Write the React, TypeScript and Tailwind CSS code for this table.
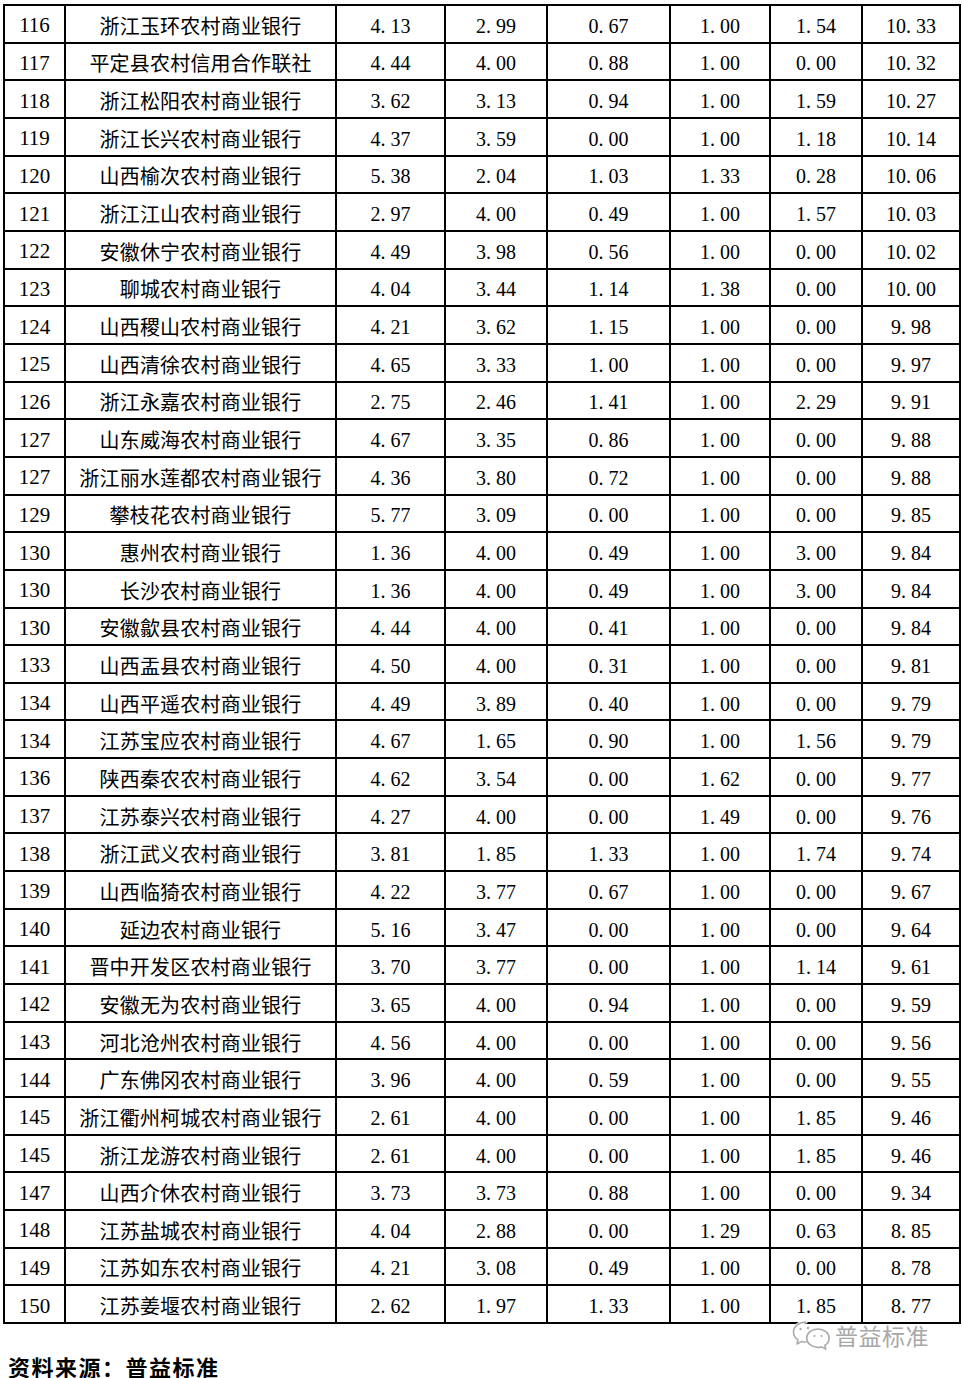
import React from "react";

type Row = [string, string, string, string, string, string, string, string];

const rows: Row[] = [
  ["116", "浙江玉环农村商业银行", "4.13", "2.99", "0.67", "1.00", "1.54", "10.33"],
  ["117", "平定县农村信用合作联社", "4.44", "4.00", "0.88", "1.00", "0.00", "10.32"],
  ["118", "浙江松阳农村商业银行", "3.62", "3.13", "0.94", "1.00", "1.59", "10.27"],
  ["119", "浙江长兴农村商业银行", "4.37", "3.59", "0.00", "1.00", "1.18", "10.14"],
  ["120", "山西榆次农村商业银行", "5.38", "2.04", "1.03", "1.33", "0.28", "10.06"],
  ["121", "浙江江山农村商业银行", "2.97", "4.00", "0.49", "1.00", "1.57", "10.03"],
  ["122", "安徽休宁农村商业银行", "4.49", "3.98", "0.56", "1.00", "0.00", "10.02"],
  ["123", "聊城农村商业银行", "4.04", "3.44", "1.14", "1.38", "0.00", "10.00"],
  ["124", "山西稷山农村商业银行", "4.21", "3.62", "1.15", "1.00", "0.00", "9.98"],
  ["125", "山西清徐农村商业银行", "4.65", "3.33", "1.00", "1.00", "0.00", "9.97"],
  ["126", "浙江永嘉农村商业银行", "2.75", "2.46", "1.41", "1.00", "2.29", "9.91"],
  ["127", "山东威海农村商业银行", "4.67", "3.35", "0.86", "1.00", "0.00", "9.88"],
  ["127", "浙江丽水莲都农村商业银行", "4.36", "3.80", "0.72", "1.00", "0.00", "9.88"],
  ["129", "攀枝花农村商业银行", "5.77", "3.09", "0.00", "1.00", "0.00", "9.85"],
  ["130", "惠州农村商业银行", "1.36", "4.00", "0.49", "1.00", "3.00", "9.84"],
  ["130", "长沙农村商业银行", "1.36", "4.00", "0.49", "1.00", "3.00", "9.84"],
  ["130", "安徽歙县农村商业银行", "4.44", "4.00", "0.41", "1.00", "0.00", "9.84"],
  ["133", "山西盂县农村商业银行", "4.50", "4.00", "0.31", "1.00", "0.00", "9.81"],
  ["134", "山西平遥农村商业银行", "4.49", "3.89", "0.40", "1.00", "0.00", "9.79"],
  ["134", "江苏宝应农村商业银行", "4.67", "1.65", "0.90", "1.00", "1.56", "9.79"],
  ["136", "陕西秦农农村商业银行", "4.62", "3.54", "0.00", "1.62", "0.00", "9.77"],
  ["137", "江苏泰兴农村商业银行", "4.27", "4.00", "0.00", "1.49", "0.00", "9.76"],
  ["138", "浙江武义农村商业银行", "3.81", "1.85", "1.33", "1.00", "1.74", "9.74"],
  ["139", "山西临猗农村商业银行", "4.22", "3.77", "0.67", "1.00", "0.00", "9.67"],
  ["140", "延边农村商业银行", "5.16", "3.47", "0.00", "1.00", "0.00", "9.64"],
  ["141", "晋中开发区农村商业银行", "3.70", "3.77", "0.00", "1.00", "1.14", "9.61"],
  ["142", "安徽无为农村商业银行", "3.65", "4.00", "0.94", "1.00", "0.00", "9.59"],
  ["143", "河北沧州农村商业银行", "4.56", "4.00", "0.00", "1.00", "0.00", "9.56"],
  ["144", "广东佛冈农村商业银行", "3.96", "4.00", "0.59", "1.00", "0.00", "9.55"],
  ["145", "浙江衢州柯城农村商业银行", "2.61", "4.00", "0.00", "1.00", "1.85", "9.46"],
  ["145", "浙江龙游农村商业银行", "2.61", "4.00", "0.00", "1.00", "1.85", "9.46"],
  ["147", "山西介休农村商业银行", "3.73", "3.73", "0.88", "1.00", "0.00", "9.34"],
  ["148", "江苏盐城农村商业银行", "4.04", "2.88", "0.00", "1.29", "0.63", "8.85"],
  ["149", "江苏如东农村商业银行", "4.21", "3.08", "0.49", "1.00", "0.00", "8.78"],
  ["150", "江苏姜堰农村商业银行", "2.62", "1.97", "1.33", "1.00", "1.85", "8.77"],
];

function Num({ v }: { v: string }) {
  const [a, b] = v.split(".");
  return (
    <span className="whitespace-nowrap">
      {a}
      <span className="inline-block w-[0.5em] text-left">.</span>
      {b}
    </span>
  );
}

const cell =
  "bg-white flex items-center justify-center pt-[4px] text-black leading-none";

function WeChatLogo() {
  return (
    <svg width="40" height="32" viewBox="0 0 40 32" fill="none">
      <g stroke="#ffffff" strokeWidth="3.2" strokeLinecap="round" strokeLinejoin="round">
        <path d="M15 3C8 3 2.5 7.5 2.5 13c0 3.2 1.8 6 4.6 7.8L6 25l4.8-2.6c1.3.4 2.7.6 4.2.6" />
        <path d="M27 10c-6.3 0-11.3 4.1-11.3 9.2S20.7 28.4 27 28.4c1.3 0 2.5-.2 3.6-.5l4.2 2.2-1-3.6c2.5-1.7 4.3-4.3 4.3-7.3C38.1 14.1 33.2 10 27 10z" />
      </g>
      <g stroke="#acacac" strokeWidth="1.6" strokeLinecap="round" strokeLinejoin="round">
        <path d="M15 3C8 3 2.5 7.5 2.5 13c0 3.2 1.8 6 4.6 7.8L6 25l4.8-2.6c1.3.4 2.7.6 4.2.6" />
        <path d="M27 10c-6.3 0-11.3 4.1-11.3 9.2S20.7 28.4 27 28.4c1.3 0 2.5-.2 3.6-.5l4.2 2.2-1-3.6c2.5-1.7 4.3-4.3 4.3-7.3C38.1 14.1 33.2 10 27 10z" />
      </g>
      <circle cx="9.5" cy="10" r="1.2" fill="#acacac" />
      <circle cx="17" cy="9" r="1.2" fill="#acacac" />
      <circle cx="23.5" cy="17" r="1.1" fill="#acacac" />
      <circle cx="30.5" cy="17" r="1.1" fill="#acacac" />
    </svg>
  );
}

export default function App() {
  return (
    <div className="relative w-[964px] h-[1378px] bg-white overflow-hidden">
      <div className="pt-[4px] pl-[3px]">
        <div className="grid w-[958px] grid-cols-[59px_269px_107px_100px_121px_98px_90px_96px] auto-rows-[35.66px] gap-[2px] bg-black p-[2px]">
          {rows.map((r, i) => (
            <React.Fragment key={i}>
              <div className={`${cell} text-[21px] font-['Liberation_Serif',serif]`}>{r[0]}</div>
              <div
                className={`${cell} text-[20px] tracking-[0.2px] font-['Noto_Sans_CJK_SC',sans-serif] font-normal`}
              >
                {r[1]}
              </div>
              {r.slice(2).map((v, j) => (
                <div key={j} className={`${cell} text-[20px] font-['Liberation_Serif',serif]`}>
                  <Num v={v} />
                </div>
              ))}
            </React.Fragment>
          ))}
        </div>
      </div>
      <div className="mt-[30px] pl-[8px] text-[22px] leading-[24px] tracking-[1.5px] font-bold text-black font-['Noto_Sans_CJK_SC',sans-serif]">
        资料来源：普益标准
      </div>
      <div className="absolute left-[791px] top-[1319px] flex items-center gap-[4px]">
        <WeChatLogo />
        <span className="text-[23px] leading-none tracking-[0.5px] text-[#a8a8a8] font-['Noto_Sans_CJK_SC',sans-serif] font-normal [text-shadow:0_0_2px_#fff,0_0_2px_#fff]">
          普益标准
        </span>
      </div>
    </div>
  );
}
